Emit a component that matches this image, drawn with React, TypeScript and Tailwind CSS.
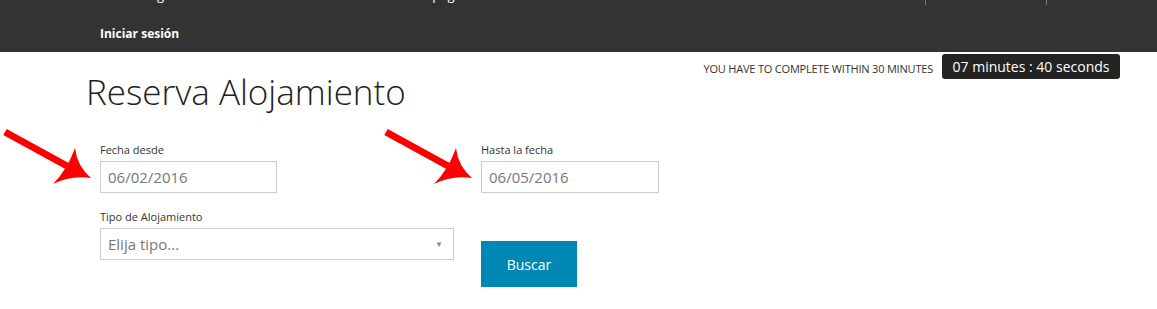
import React from "react"

const Arrow = ({ className }: { className: string }) => (
  <svg className={className} width="96" height="64" viewBox="0 0 96 64" fill="none">
    <path d="M2 6 L64 40" stroke="#ff0000" strokeWidth="7" strokeLinecap="butt" />
    <path d="M72 22 Q74 40 88 52 Q68 49 50 58 Q64 44 72 22 Z" fill="#ff0000" />
  </svg>
)

const Field = ({ label, value, width }: { label: string; value: string; width: string }) => (
  <div className="flex flex-col">
    <label className="text-[11px] text-[#333] leading-[14px] mb-[4px]">{label}</label>
    <div className={`${width} h-[32px] border border-[#ccc] flex items-center px-[7px] text-[15px] text-[#777]`}>
      {value}
    </div>
  </div>
)

const App = () => {
  return (
    <div className="w-[1157px] h-[309px] bg-white overflow-hidden relative" style={{ fontFamily: "'Open Sans', 'Liberation Sans', sans-serif" }}>
      <nav className="bg-[#333333] h-[52px] relative">
        <div className="absolute -top-[12px] left-[100px] flex text-white text-[13px] leading-[14px]">
          <span className="ml-[34px]">Ming</span>
          <span className="ml-[250px]">Mi página</span>
        </div>
        <div className="absolute top-0 left-[925px] w-px h-[5px] bg-[#777]" />
        <div className="absolute top-0 left-[1046px] w-px h-[5px] bg-[#777]" />
        <div className="pl-[100px] pt-[26px] text-white text-[12px] font-bold leading-[16px]">Iniciar sesión</div>
      </nav>

      <div className="flex justify-end items-start pr-[37px] pt-[2px]">
        <span className="text-[11px] text-[#333] uppercase mt-[7px] mr-[9px] tracking-[-0.2px]">You have to complete within 30 minutes</span>
        <div className="bg-[#232323] text-white text-[14px] h-[25px] w-[178px] flex items-center justify-center rounded-[3px]">
          07 minutes : 40 seconds
        </div>
      </div>

      <h1 className="pl-[86px] -mt-[13px] text-[35px] font-light text-[#222] leading-[52px]">Reserva Alojamiento</h1>

      <div className="pl-[100px] mt-[25px] flex gap-[28px]">
        <div className="w-[353px] flex flex-col gap-[17px]">
          <Field label="Fecha desde" value="06/02/2016" width="w-[177px]" />
          <div className="flex flex-col">
            <label className="text-[11px] text-[#333] leading-[14px] mb-[4px]">Tipo de Alojamiento</label>
            <div className="w-[354px] h-[32px] border border-[#ccc] flex items-center justify-between pl-[7px] pr-[10px] text-[15px] text-[#777]">
              <span>Elija tipo...</span>
              <span className="text-[8px] text-[#888]">▼</span>
            </div>
          </div>
        </div>
        <div className="flex flex-col">
          <Field label="Hasta la fecha" value="06/05/2016" width="w-[178px]" />
          <button className="mt-[48px] w-[96px] h-[46px] bg-[#0088b5] text-white text-[14px]">Buscar</button>
        </div>
      </div>

      <Arrow className="absolute left-[3px] top-[126px]" />
      <Arrow className="absolute left-[384px] top-[126px]" />
    </div>
  )
}

export default App
